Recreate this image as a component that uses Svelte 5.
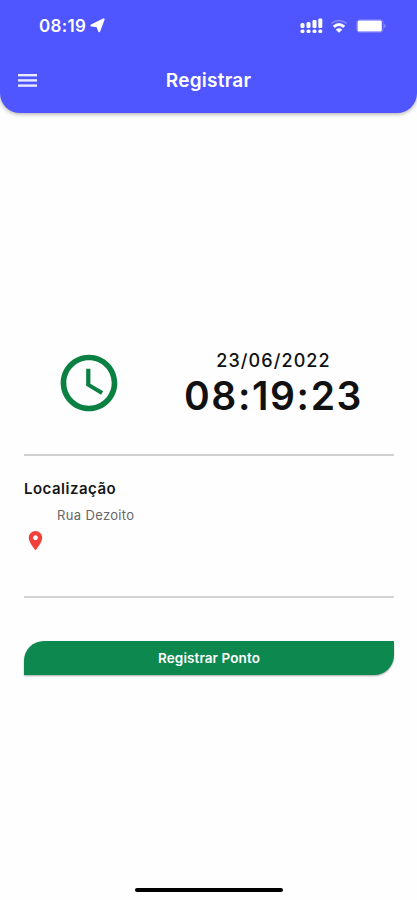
<script>
	let statusTime = '08:19';
	let date = '23/06/2022';
	let time = '08:19:23';
	let address = 'Rua Dezoito';
</script>

<main class="page">
	<header class="header">
		<div class="status">
			<span class="status-time">{statusTime}</span>
			<svg class="arrow" width="15" height="15" viewBox="0 0 15 15">
				<path d="M13.6 1.4 L9.2 13.2 L7.2 8.2 L1.4 7.4 Z" fill="#fff" stroke="#fff" stroke-width="2" stroke-linejoin="round" />
			</svg>
			<div class="status-icons">
				<svg width="23" height="16" viewBox="0 0 23 16" fill="#fff">
					<rect x="0.5" y="5" width="4" height="5" rx="1.5" />
					<rect x="6.5" y="4" width="4" height="6" rx="1.5" />
					<rect x="12.5" y="2" width="4" height="8" rx="1.2" />
					<rect x="18.3" y="0.5" width="4" height="9.5" rx="1.2" />
					<rect x="0.5" y="11.5" width="4" height="3.5" rx="1.5" />
					<rect x="6.5" y="11.5" width="4" height="3.5" rx="1.5" />
					<rect x="12.5" y="11.5" width="4" height="3.5" rx="1.5" />
					<rect x="18.3" y="11.5" width="4" height="3.5" rx="1.5" />
				</svg>
				<svg class="wifi" width="18" height="14" viewBox="0 0 18 14" fill="none">
					<path d="M1.5 4.3 Q9 -1.5 16.5 4.3" stroke="#8789ff" stroke-width="1.5" />
					<path d="M3.8 7.8 Q9 3.2 14.2 7.8" stroke="#fff" stroke-width="3" />
					<path d="M9 13.4 L6 10.6 Q9 8.2 12 10.6 Z" fill="#fff" stroke="#fff" stroke-width="0.6" />
				</svg>
				<svg class="battery" width="31" height="14" viewBox="0 0 31 14">
					<rect x="0.7" y="0.7" width="26.6" height="12.6" rx="3" fill="none" stroke="#7a7dff" stroke-width="1" />
					<rect x="1.6" y="1.4" width="24.2" height="11.2" rx="1.5" fill="#fff" />
					<path d="M28.5 4.7 Q30.4 7 28.5 9.3 Z" fill="#b4b5ff" />
				</svg>
			</div>
		</div>

		<div class="toolbar">
			<button class="menu" aria-label="Menu">
				<svg width="19" height="13" viewBox="0 0 19 13" fill="#e9eaff">
					<rect y="0" width="19" height="2.4" />
					<rect y="5.2" width="19" height="2.4" />
					<rect y="10.4" width="19" height="2.4" />
				</svg>
			</button>
			<h1>Registrar</h1>
		</div>
	</header>

	<section class="clock">
		<div class="clock-icon">
			<svg width="68" height="68" viewBox="0 0 24 24" fill="#0b8043">
				<path d="M11.99 2C6.47 2 2 6.48 2 12s4.47 10 9.99 10C17.52 22 22 17.52 22 12S17.52 2 11.99 2zM12 20c-4.42 0-8-3.58-8-8s3.58-8 8-8 8 3.58 8 8-3.58 8-8 8z" />
				<path d="M12.5 7H11v6l5.25 3.15.75-1.23-4.5-2.67z" />
			</svg>
		</div>
		<div class="clock-text">
			<div class="date">{date}</div>
			<div class="time">{time}</div>
		</div>
	</section>

	<section class="location">
		<h2>Localização</h2>
		<p>{address}</p>
		<svg width="23" height="23" viewBox="0 0 24 24" fill="#f4403a">
			<path d="M12 2C8.13 2 5 5.13 5 9c0 5.25 7 13 7 13s7-7.75 7-13c0-3.87-3.13-7-7-7zm0 9.5c-1.38 0-2.5-1.12-2.5-2.5s1.12-2.5 2.5-2.5 2.5 1.12 2.5 2.5-1.12 2.5-2.5 2.5z" />
		</svg>
	</section>

	<button class="register">Registrar Ponto</button>

	<div class="home-bar"></div>
</main>

<style>
	:global(body) {
		background: #fefefe;
	}

	.page {
		height: 900px;
		display: flex;
		flex-direction: column;
		background: #fefefe;
		font-family: Inter, sans-serif;
		overflow: hidden;
	}

	.header {
		height: 113px;
		flex-shrink: 0;
		background: #4f55ff;
		border-radius: 0 0 20px 20px;
		box-shadow: 0 1px 4px rgba(0, 0, 0, 0.35);
		color: white;
	}

	.status {
		height: 51px;
		display: flex;
		align-items: center;
		padding: 0 30px 0 39px;
	}

	.status-time {
		width: 48px;
		font-size: 17px;
		font-weight: 600;
		letter-spacing: 0.3px;
	}

	.arrow {
		margin-left: 3px;
	}

	.status-icons {
		display: flex;
		align-items: center;
		margin-left: auto;
	}

	.wifi {
		margin-left: 7px;
	}

	.battery {
		margin-left: 8px;
	}

	.toolbar {
		height: 58px;
		display: grid;
		grid-template-columns: 55px 1fr 55px;
		align-items: center;
	}

	.menu {
		display: flex;
		margin-left: 18px;
		padding: 0;
		border: none;
		background: none;
	}

	h1 {
		margin: 0;
		font-size: 19px;
		font-weight: 600;
		letter-spacing: 0.25px;
		text-align: center;
	}

	.clock {
		display: grid;
		grid-template-columns: 129px 1fr;
		align-items: center;
		height: 70px;
		margin: 236px 23px 0 24px;
		padding-bottom: 35px;
		border-bottom: 2px solid #cfd0d1;
	}

	.clock-icon {
		display: flex;
		justify-content: center;
		padding-bottom: 2px;
	}

	.clock-text {
		text-align: center;
		color: #111;
		white-space: nowrap;
	}

	.date {
		font-size: 18px;
		line-height: 22px;
		font-weight: 500;
		letter-spacing: 1.1px;
	}

	.time {
		font-size: 39px;
		line-height: 47px;
		font-weight: 600;
		letter-spacing: 1.6px;
	}

	.location {
		height: 142px;
		box-sizing: border-box;
		margin: 0 23px 0 24px;
		padding-top: 24px;
		border-bottom: 2px solid #d3d4d5;
	}

	h2 {
		margin: 0;
		font-size: 15px;
		line-height: 18px;
		font-weight: 600;
		letter-spacing: 0.5px;
		color: #161616;
	}

	.location p {
		margin: 9px 0 6px 33px;
		font-size: 13px;
		line-height: 16px;
		letter-spacing: 0.35px;
		color: #666;
	}

	.location svg {
		display: block;
	}

	.register {
		height: 34px;
		flex-shrink: 0;
		margin: 43px 23px 0 24px;
		padding: 0;
		border: none;
		border-radius: 20px 0 20px 0;
		background: #0d884f;
		box-shadow: 0 1px 2px rgba(0, 0, 0, 0.35);
		color: white;
		font-family: inherit;
		font-size: 13.5px;
		font-weight: 600;
		letter-spacing: 0.1px;
	}

	.home-bar {
		width: 148px;
		height: 4px;
		margin: auto auto 8px;
		border-radius: 2px;
		background: #000;
	}
</style>
